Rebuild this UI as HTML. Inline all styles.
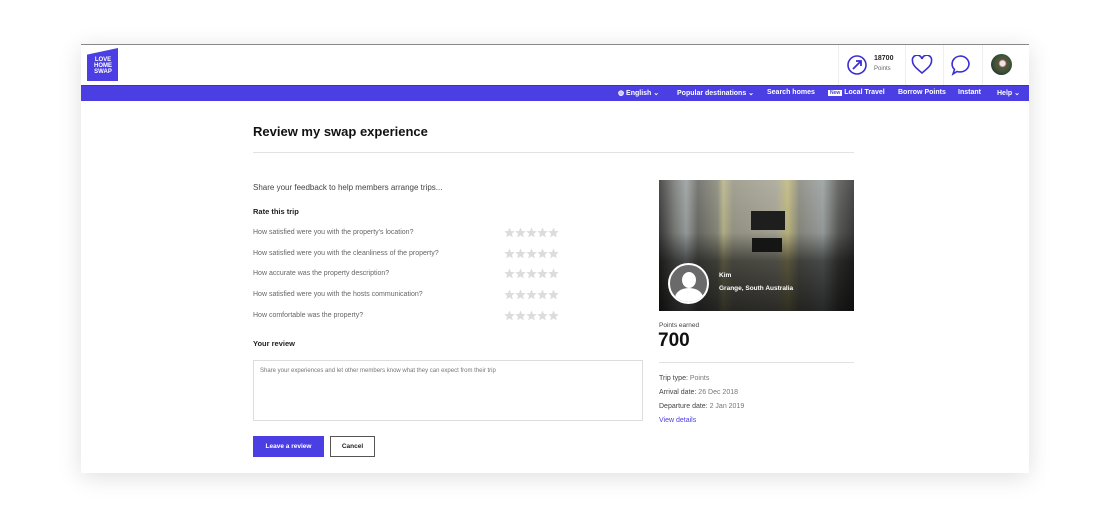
<!DOCTYPE html>
<html><head><style>
*{margin:0;padding:0;box-sizing:border-box}
body{width:1110px;height:518px;background:#fff;font-family:"Liberation Sans",sans-serif;position:relative;overflow:hidden;color:#222}
.a{position:absolute;white-space:nowrap}
.card{position:absolute;left:81px;top:44px;width:948px;height:429px;background:#fff;border-top:1px solid #888;box-shadow:0 4px 22px rgba(0,0,0,.13)}
.nav{position:absolute;left:81px;top:85px;width:948px;height:16px;background:#4b3fe3;border-top:1px solid #3a2fd0}
.nv{position:absolute;top:89px;color:#fff;font-size:7px;font-weight:bold;white-space:nowrap}
.q{position:absolute;left:253px;font-size:7px;color:#666}
.st{position:absolute;left:504px}
.sm{font-size:7px;color:#444}
.vd{position:absolute;top:45px;width:1px;height:40px;background:#eee}
</style></head><body>
<svg width="0" height="0" style="position:absolute"><defs><symbol id="s" viewBox="0 0 12 12"><path d="M6 .5L7.6 4.3 11.7 4.6 8.6 7.3 9.6 11.3 6 9.1 2.4 11.3 3.4 7.3 .3 4.6 4.4 4.3Z" fill="#dcdcdc"/></symbol><g id="r"><use href="#s" x="0" width="11" height="11"/><use href="#s" x="11" width="11" height="11"/><use href="#s" x="22" width="11" height="11"/><use href="#s" x="33" width="11" height="11"/><use href="#s" x="44" width="11" height="11"/></g></defs></svg>
<div class="card"></div>
<div class="a" style="left:87px;top:48px;width:31px;height:33px;background:#4b3fe3;clip-path:polygon(0 20%,100% 0,100% 100%,0 100%)"></div>
<div class="a" style="left:91px;top:57px;color:#fff;font-size:6px;font-weight:bold;line-height:6px;text-align:center;width:24px">LOVE<br>HOME<br>SWAP</div>
<div class="vd" style="left:838px"></div><div class="vd" style="left:905px"></div><div class="vd" style="left:943px"></div><div class="vd" style="left:982px"></div>
<svg class="a" style="left:846px;top:54px" width="22" height="22" viewBox="0 0 22 22"><circle cx="11" cy="11" r="9" fill="none" stroke="#3a2fd0" stroke-width="1.6"/><path d="M7 15L15 7M10 7h5v5" fill="none" stroke="#3a2fd0" stroke-width="1.8"/></svg>
<div class="a" style="left:874px;top:55px;font-size:7px;font-weight:bold">18700</div>
<div class="a" style="left:874px;top:66px;font-size:6px;color:#666">Points</div>
<svg class="a" style="left:911px;top:55px" width="22" height="20" viewBox="0 0 22 20"><path d="M11 18C5 13 1.5 10 1.5 6A4.5 4.5 0 0 1 11 4A4.5 4.5 0 0 1 20.5 6C20.5 10 17 13 11 18Z" fill="none" stroke="#3a2fd0" stroke-width="1.6"/></svg>
<svg class="a" style="left:950px;top:54px" width="22" height="22" viewBox="0 0 22 22"><path d="M11 2A9 8 0 1 1 7 17.5L3 20L4.5 15.5A9 8 0 0 1 11 2Z" fill="none" stroke="#3a2fd0" stroke-width="1.6"/></svg>
<div class="a" style="left:991px;top:54px;width:21px;height:21px;border-radius:50%;background:radial-gradient(circle at 55% 45%,#e8e8e8 0 15%,#6a4a3a 25%,#3a5a3a 45%,#333 75%)"></div>
<div class="nav"></div>
<div class="nv" style="left:618px">◍ English ⌄</div>
<div class="nv" style="left:677px">Popular destinations ⌄</div>
<div class="nv" style="left:767px">Search homes</div>
<div class="nv" style="left:828px"><span style="background:#fff;color:#4b3fe3;font-size:5px;padding:0 2px">New</span> Local Travel</div>
<div class="nv" style="left:898px">Borrow Points</div>
<div class="nv" style="left:958px">Instant</div>
<div class="nv" style="left:997px">Help ⌄</div>
<div class="a" style="left:253px;top:124px;font-size:13px;font-weight:bold;color:#111">Review my swap experience</div>
<div class="a" style="left:253px;top:152px;width:601px;height:1px;background:#e2e2e2"></div>
<div class="a" style="left:253px;top:183px;font-size:8px;color:#444">Share your feedback to help members arrange trips...</div>
<div class="a" style="left:253px;top:207px;font-size:7.5px;font-weight:bold">Rate this trip</div>
<div class="q" style="top:229px">How satisfied were you with the property's location?</div>
<div class="q" style="top:250px">How satisfied were you with the cleanliness of the property?</div>
<div class="q" style="top:270px">How accurate was the property description?</div>
<div class="q" style="top:291px">How satisfied were you with the hosts communication?</div>
<div class="q" style="top:312px">How comfortable was the property?</div>
<svg class="st" style="top:227px" width="56" height="12"><use href="#r"/></svg>
<svg class="st" style="top:248px" width="56" height="12"><use href="#r"/></svg>
<svg class="st" style="top:268px" width="56" height="12"><use href="#r"/></svg>
<svg class="st" style="top:289px" width="56" height="12"><use href="#r"/></svg>
<svg class="st" style="top:310px" width="56" height="12"><use href="#r"/></svg>
<div class="a" style="left:253px;top:339px;font-size:7.5px;font-weight:bold">Your review</div>
<div class="a" style="left:253px;top:360px;width:390px;height:61px;border:1px solid #ddd"></div>
<div class="a" style="left:260px;top:368px;font-size:6px;color:#777">Share your experiences and let other members know what they can expect from their trip</div>
<div class="a" style="left:253px;top:436px;width:71px;height:21px;background:#4b3fe3;color:#fff;font-size:6.5px;font-weight:bold;text-align:center;line-height:21px">Leave a review</div>
<div class="a" style="left:330px;top:436px;width:45px;height:21px;border:1px solid #555;font-size:6.5px;font-weight:bold;text-align:center;line-height:19px">Cancel</div>
<div class="a" style="left:659px;top:180px;width:195px;height:131px;background:linear-gradient(90deg,#3a3a38 0%,#7a7c78 8%,#9aa0a0 14%,#6b6c66 20%,#8a8a7c 30%,#b8b48a 33%,#9a9888 38%,#a8a698 60%,#c0b880 66%,#8a8b80 72%,#9aa0a0 84%,#5a5b58 92%,#3a3a3a 100%)"></div>
<div class="a" style="left:659px;top:180px;width:195px;height:131px;background:linear-gradient(180deg,rgba(255,255,255,.1) 0%,rgba(0,0,0,.05) 40%,rgba(0,0,0,.55) 62%,rgba(0,0,0,.75) 100%)"></div>
<div class="a" style="left:751px;top:211px;width:34px;height:19px;background:#1e1e1e"></div>
<div class="a" style="left:752px;top:238px;width:30px;height:14px;background:#151515"></div>
<div class="a" style="left:668px;top:263px;width:41px;height:41px;border-radius:50%;background:#6a6a6a;border:2px solid #fff;overflow:hidden"><div style="position:absolute;left:12px;top:7px;width:14px;height:16px;border-radius:50%;background:#fff"></div><div style="position:absolute;left:5px;top:23px;width:28px;height:20px;border-radius:50% 50% 0 0;background:#fff"></div></div>
<div class="a" style="left:719px;top:272px;font-size:6.5px;font-weight:bold;color:#fff">Kim</div>
<div class="a" style="left:719px;top:285px;font-size:6.5px;font-weight:bold;color:#fff">Grange, South Australia</div>
<div class="a" style="left:659px;top:322px;font-size:6.5px;color:#444">Points earned</div>
<div class="a" style="left:658px;top:330px;font-size:19px;font-weight:bold;color:#111">700</div>
<div class="a" style="left:659px;top:362px;width:195px;height:1px;background:#e2e2e2"></div>
<div class="a sm" style="left:659px;top:375px">Trip type: <span style="color:#777">Points</span></div>
<div class="a sm" style="left:659px;top:389px">Arrival date: <span style="color:#777">26 Dec 2018</span></div>
<div class="a sm" style="left:659px;top:403px">Departure date: <span style="color:#777">2 Jan 2019</span></div>
<div class="a" style="left:659px;top:417px;font-size:7px;color:#4b3fe3">View details</div>
</body></html>
